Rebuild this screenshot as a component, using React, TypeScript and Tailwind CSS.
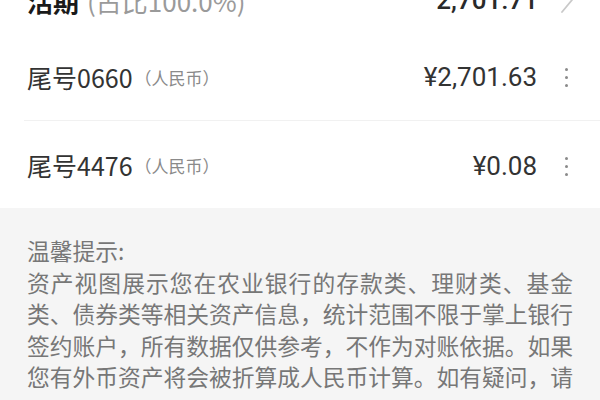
import React from 'react';

const cjk = { fontFamily: '"Noto Sans CJK SC", "Noto Sans", sans-serif' };
const num = { fontFamily: 'Roboto, "Noto Sans CJK SC", sans-serif' };

const accounts = [
  { tail: '0660', amount: '¥2,701.63' },
  { tail: '4476', amount: '¥0.08' },
];

function Dots() {
  return (
    <div className="ml-[28px] flex flex-col gap-[5px]">
      <span className="block w-[3px] h-[3px] rounded-full bg-[#8a8a8a]" />
      <span className="block w-[3px] h-[3px] rounded-full bg-[#8a8a8a]" />
      <span className="block w-[3px] h-[3px] rounded-full bg-[#8a8a8a]" />
    </div>
  );
}

export default function App() {
  return (
    <div className="w-[600px] h-[400px] overflow-hidden bg-white" style={cjk}>
      {/* summary row, scrolled mostly out of view */}
      <div className="-mt-[34px] h-[68px] flex items-center pl-[27px] pr-[26px]">
        <span className="text-[26px] font-bold text-[#1a1a1a]">活期</span>
        <span className="ml-[8px] text-[26px] text-[#9a9a9a]">(占比100.0%)</span>
        <span className="ml-auto text-[26px] font-medium text-[#2a2a2a]" style={num}>2,701.71</span>
        <svg className="ml-[22px]" width="14" height="26" viewBox="0 0 14 26" fill="none">
          <polyline points="2,1 12,13 2,25" stroke="#c9c9c9" strokeWidth="1.8" strokeLinecap="round" strokeLinejoin="round" />
        </svg>
      </div>

      {accounts.map((a, i) => (
        <div key={a.tail} className={`h-[87px] flex items-center pl-[27px] pr-[32px] ${i === 0 ? 'relative' : 'pt-[3px]'}`}>
          <span className="text-[25px] text-[#333333]">尾号{a.tail}</span>
          <span className="text-[17px] text-[#8a8a8a] ml-[2px]">（人民币）</span>
          <span className="ml-auto text-[26px] text-[#333333]" style={num}>{a.amount}</span>
          <Dots />
          {i === 0 && <div className="absolute left-[24px] right-0 bottom-0 h-px bg-[#f1f1f1]" />}
        </div>
      ))}

      <div className="bg-[#f5f5f5] px-[27px] pt-[27px] h-[200px]">
        <p className="text-[22.75px] leading-[31.5px] text-[#777777] text-justify">
          温馨提示:
          <br />
          资产视图展示您在农业银行的存款类、理财类、基金类、债券类等相关资产信息，统计范围不限于掌上银行签约账户，所有数据仅供参考，不作为对账依据。如果您有外币资产将会被折算成人民币计算。如有疑问，请
        </p>
      </div>
    </div>
  );
}
